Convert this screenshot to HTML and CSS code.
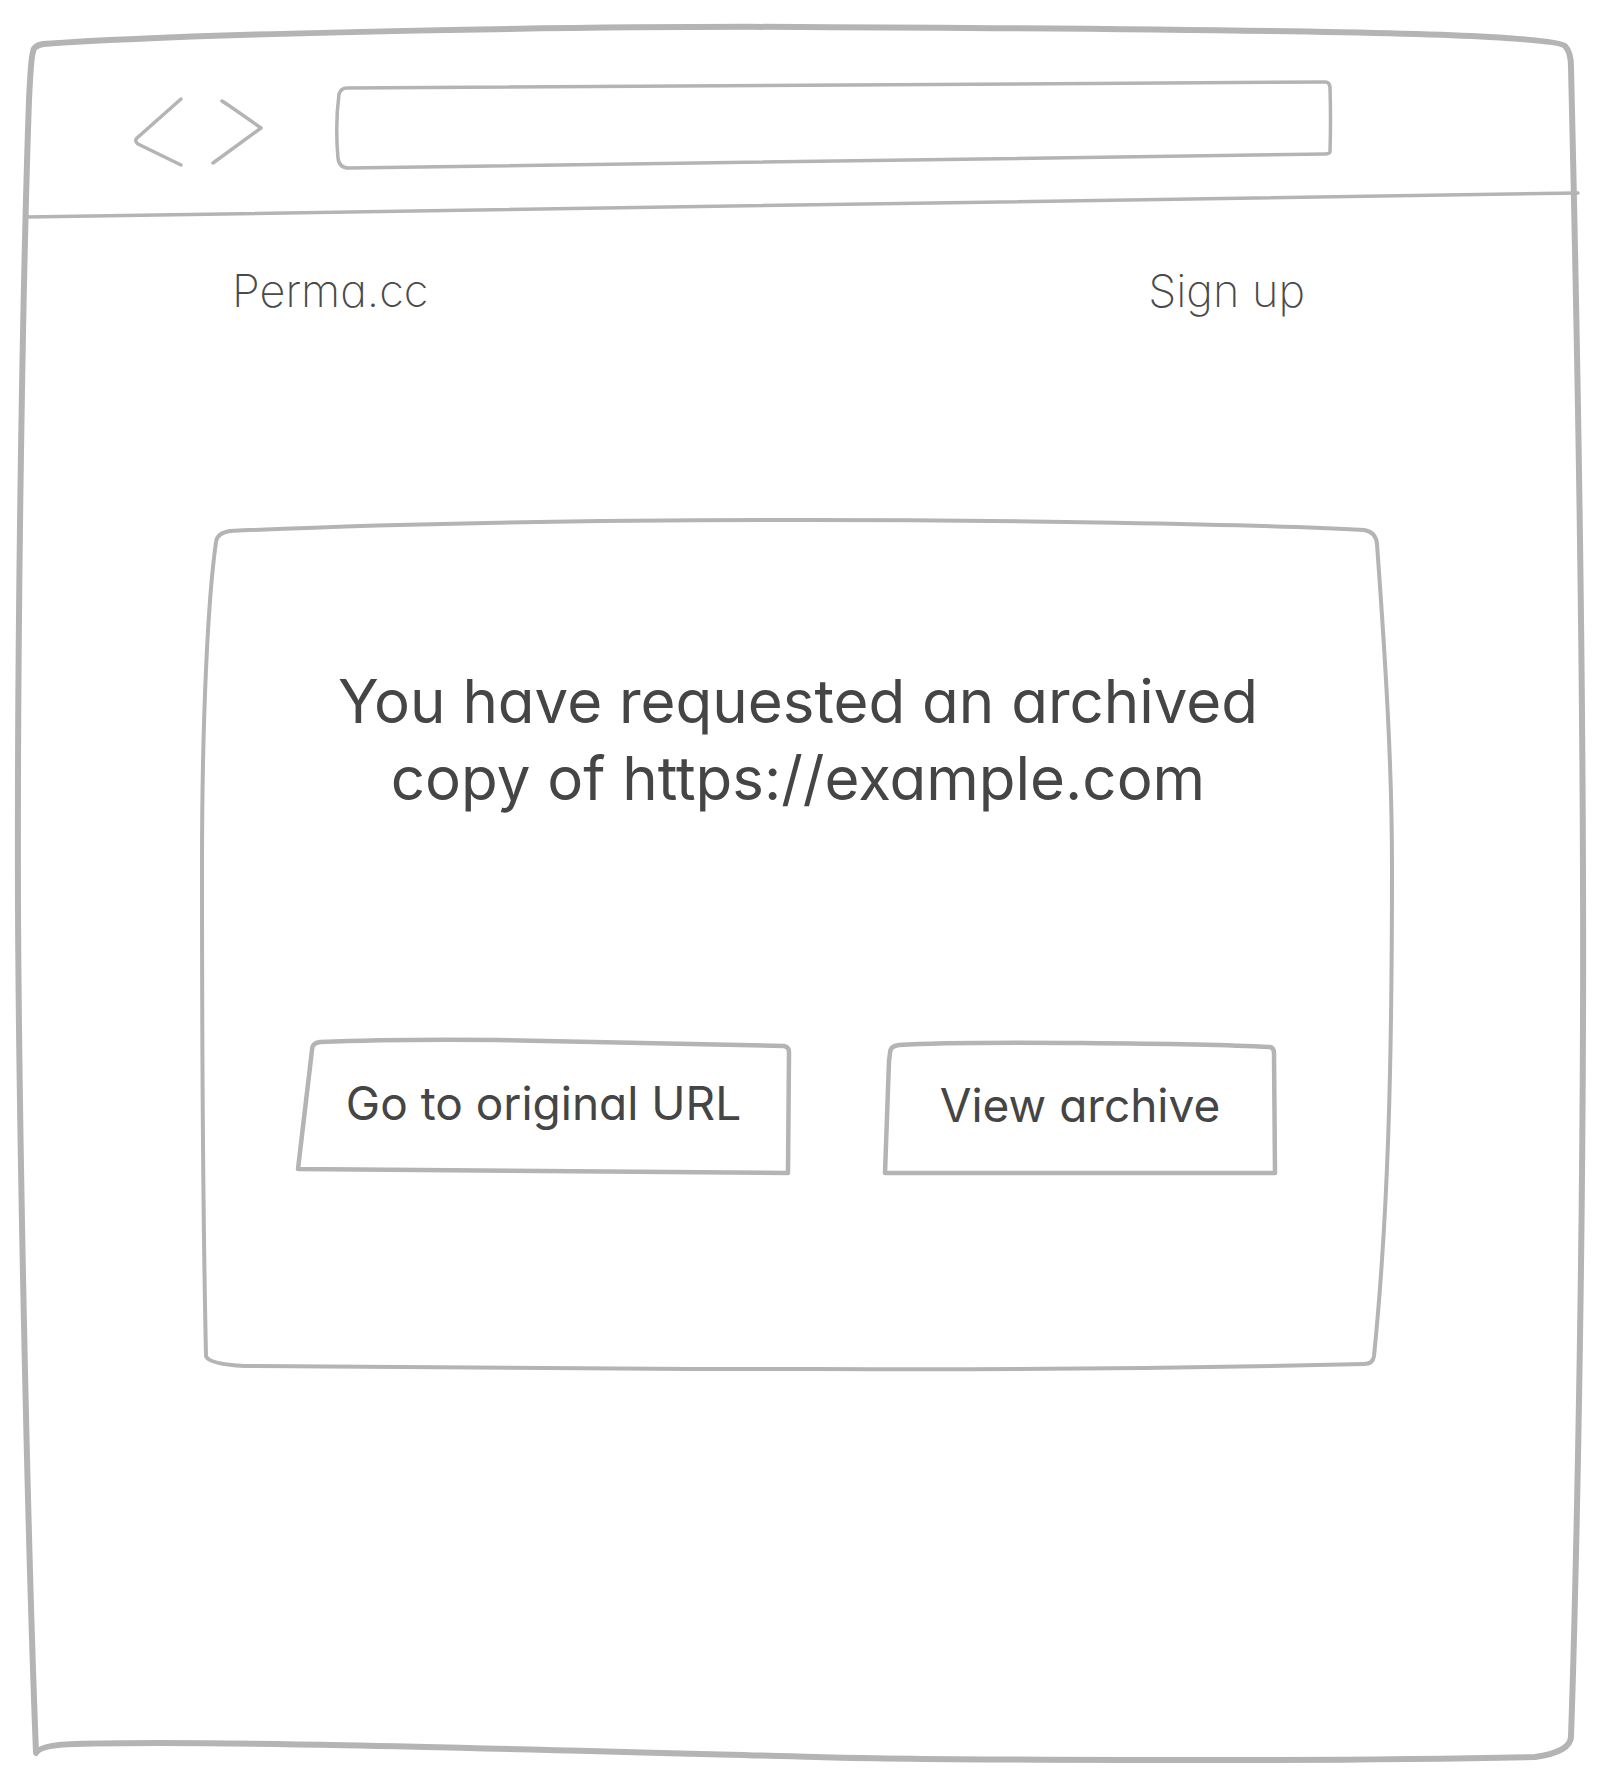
FILE: index.html
```html
<!DOCTYPE html>
<html lang="en">
<head>
    <meta charset="UTF-8">
    <meta name="viewport" content="width=device-width, initial-scale=1.0">
    <title>Perma.cc - Archived copy</title>
    <link rel="stylesheet" href="styles.css">
</head>
<body>
    <div class="browser">
        <!-- hand-drawn window frame + toolbar divider -->
        <svg class="sketch sketch-frame" viewBox="0 0 1573 1742" preserveAspectRatio="none">
            <path d="M 18 30 Q 18 24 28 22 C 200 10 600 4 785 5 C 1000 6 1350 8 1474 15 Q 1545 19 1550 24 Q 1556 30 1556 45 C 1562 300 1569 700 1568 1000 C 1567 1300 1560 1600 1556 1715 Q 1555 1730 1520 1735 C 1300 1740 900 1738 801 1735 C 500 1727 200 1718 60 1722 Q 25 1723 21 1731 C 12 1500 4 1100 3 885 C 2 600 8 250 14 78 Q 16 35 18 30 Z"/>
            <path class="divider" d="M 11 195 Q 785 181 1563 171"/>
        </svg>

        <div class="toolbar">
            <svg class="nav-arrows" viewBox="0 0 140 80">
                <path d="M 51 5 L 7 44 Q 4 47 8 50 L 51 71"/>
                <path d="M 92 7 Q 100 12 131 34 L 83 69"/>
            </svg>
            <div class="url-bar">
                <svg class="sketch" viewBox="0 0 998 91" preserveAspectRatio="none">
                    <path d="M 12 8 Q 400 4 990 2 Q 995 2 995 8 Q 996 40 995 72 Q 994 74 990 74 Q 500 80 14 88 Q 4 88 3 78 Q 0 45 4 14 Q 6 8 12 8 Z"/>
                </svg>
            </div>
        </div>

        <header class="site-nav">
            <a href="#" class="brand">Perma.cc</a>
            <a href="#" class="signup">Sign up</a>
        </header>

        <main class="notice">
            <svg class="sketch" viewBox="0 0 1196 854" preserveAspectRatio="none">
                <path d="M 16 24 Q 17 15 30 13 C 250 3 450 2 602 2 C 800 2 1050 6 1164 12 Q 1176 14 1177 26 C 1186 150 1192 250 1192 349 C 1192 550 1188 700 1174 838 Q 1173 846 1164 846 C 1000 850 800 852 616 851 C 400 851 150 850 45 848 Q 8 846 6 838 C 3 700 2 500 2 349 C 2 200 8 80 16 24 Z"/>
            </svg>

            <h1 class="notice-title">You have requested an archived<br>copy of https://example.com</h1>

            <div class="actions">
                <a href="#" class="btn btn-original">
                    <svg class="sketch" viewBox="0 0 495 137" preserveAspectRatio="none">
                        <path d="M 16 12 Q 16 5 24 4 Q 97 1 200 2 L 488 8 Q 493 9 493 14 L 492 135 L 2 131 L 16 12 Z"/>
                    </svg>
                    <span>Go to original URL</span>
                </a>
                <a href="#" class="btn btn-archive">
                    <svg class="sketch" viewBox="0 0 394 134" preserveAspectRatio="none">
                        <path d="M 7 12 Q 7 5 16 4 Q 60 1 200 2 Q 330 3 387 6 Q 391 7 391 12 L 392 132 L 2 132 L 6 20 Z"/>
                    </svg>
                    <span>View archive</span>
                </a>
            </div>
        </main>
    </div>
</body>
</html>
```

FILE: styles.css
```css
* {
    margin: 0;
    padding: 0;
    box-sizing: border-box;
}

body {
    font-family: Inter, 'Liberation Sans', sans-serif;
    font-feature-settings: "cv11" 1;
    background: #fff;
    color: #454545;
}

a {
    color: inherit;
    text-decoration: none;
}

/* sketchy outlines sit behind the content of their box */
.sketch {
    position: absolute;
    top: 0;
    left: 0;
    width: 100%;
    height: 100%;
    overflow: visible;
    pointer-events: none;
}

.sketch path,
.nav-arrows path {
    fill: none;
    stroke: #b4b4b4;
    stroke-width: 3.5;
    stroke-linecap: round;
    stroke-linejoin: round;
}

.browser {
    position: relative;
    width: 1573px;
    height: 1742px;
    margin: 22px 0 0 15px;
}

.sketch-frame path {
    stroke-width: 6;
}

.sketch-frame .divider {
    stroke-width: 3.5;
}

.toolbar {
    display: flex;
    align-items: flex-start;
    height: 200px;
    padding: 58px 0 0 115px;
}

.nav-arrows {
    width: 140px;
    height: 80px;
    margin-top: 14px;
    margin-right: 65px;
    overflow: visible;
}

.nav-arrows path {
    stroke-width: 3.5;
}

.url-bar {
    position: relative;
    width: 998px;
    height: 91px;
}

.site-nav {
    display: flex;
    justify-content: space-between;
    margin-top: 41px;
    padding: 0 283px 0 217px;
    font-size: 45px;
    line-height: 56px;
    font-weight: 200;
    color: #4a4a4a;
}

.notice {
    position: relative;
    width: 1196px;
    height: 854px;
    margin: 199px 0 0 185px;
    padding-top: 145px;
}

.notice .sketch path {
    stroke-width: 4;
}

.notice-title {
    position: relative;
    text-align: center;
    font-size: 60px;
    line-height: 77px;
    font-weight: 400;
    color: #454545;
}

.actions {
    display: flex;
    align-items: flex-end;
    gap: 92px;
    margin-top: 221px;
    padding-left: 96px;
}

.btn {
    position: relative;
    display: flex;
    align-items: center;
    justify-content: center;
    padding-bottom: 7px;
    font-size: 46px;
    font-weight: 400;
    color: #454545;
}

.btn span {
    position: relative;
}

.btn .sketch path {
    stroke-width: 4.5;
}

.btn-original {
    width: 495px;
    height: 137px;
}

.btn-archive {
    width: 394px;
    height: 134px;
}
```
